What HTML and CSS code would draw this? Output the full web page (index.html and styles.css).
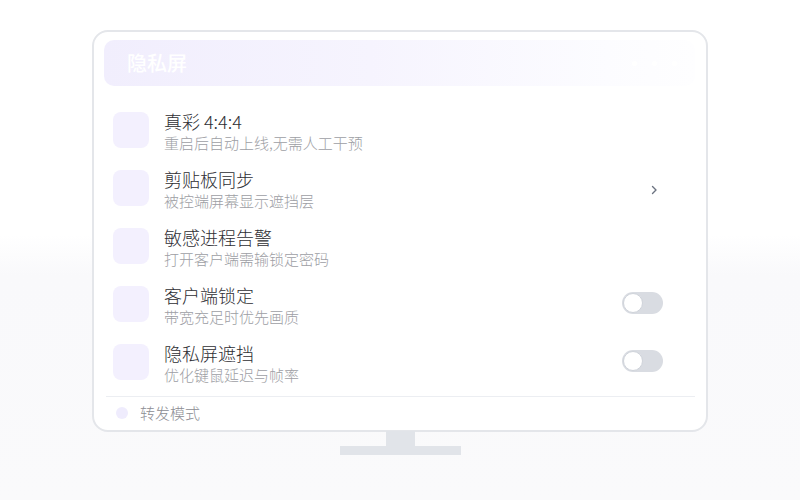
FILE: index.html
```html
<!DOCTYPE html>
<html lang="zh-CN">
<head>
<meta charset="utf-8">
<title>隐私屏</title>
<link rel="stylesheet" href="styles.css">
</head>
<body>
<div class="stage">
  <div class="monitor">
    <div class="header">
      <span class="header-title">隐私屏</span>
      <span class="header-dots"><i></i><i></i><i></i></span>
    </div>
    <div class="rows">
      <div class="row">
        <div class="icon"></div>
        <div class="text">
          <div class="title">真彩 4:4:4</div>
          <div class="sub">重启后自动上线,无需人工干预</div>
        </div>
      </div>
      <div class="row">
        <div class="icon"></div>
        <div class="text">
          <div class="title">剪贴板同步</div>
          <div class="sub">被控端屏幕显示遮挡层</div>
        </div>
        <svg class="chevron" width="7" height="10" viewBox="0 0 7 10"><polyline points="1.5,1.5 5,5 1.5,8.5" fill="none" stroke="#6b7280" stroke-width="1.4" stroke-linecap="round" stroke-linejoin="round"/></svg>
      </div>
      <div class="row">
        <div class="icon"></div>
        <div class="text">
          <div class="title">敏感进程告警</div>
          <div class="sub">打开客户端需输锁定密码</div>
        </div>
      </div>
      <div class="row">
        <div class="icon"></div>
        <div class="text">
          <div class="title">客户端锁定</div>
          <div class="sub">带宽充足时优先画质</div>
        </div>
        <div class="toggle"><span class="knob"></span></div>
      </div>
      <div class="row">
        <div class="icon"></div>
        <div class="text">
          <div class="title">隐私屏遮挡</div>
          <div class="sub">优化键鼠延迟与帧率</div>
        </div>
        <div class="toggle"><span class="knob"></span></div>
      </div>
    </div>
    <div class="divider"></div>
    <div class="footer">
      <span class="dot"></span>
      <span class="footer-text">转发模式</span>
    </div>
  </div>
  <div class="neck"></div>
  <div class="base"></div>
</div>
</body>
</html>
```
FILE: styles.css
```css
* { box-sizing: border-box; }
html, body { margin: 0; padding: 0; }
body {
  width: 800px;
  height: 500px;
  overflow: hidden;
  font-family: "Noto Sans CJK SC", "Noto Sans", sans-serif;
  background: linear-gradient(to bottom, #ffffff 0px, #ffffff 235px, #f9f9fb 275px, #fafafb 500px);
}
.stage {
  padding-top: 30px;
  display: flex;
  flex-direction: column;
  align-items: center;
}
.monitor {
  width: 616px;
  height: 402px;
  border: 2px solid #e4e6ea;
  border-radius: 16px;
  background: #ffffff;
  padding: 8px 11px 0 10px;
  display: flex;
  flex-direction: column;
}
.header {
  height: 46px;
  border-radius: 10px;
  background: linear-gradient(to right, #f1eefd 0%, #f6f4fe 45%, #fcfcff 85%, #fefeff 100%);
  display: flex;
  align-items: center;
  justify-content: space-between;
  padding: 0 18px 0 23px;
}
.header-title {
  color: #ffffff;
  font-size: 20px;
  font-weight: 500;
  line-height: 24px;
}
.header-dots { display: flex; gap: 15px; align-items: center; }
.header-dots i {
  display: block;
  width: 5px;
  height: 5px;
  border-radius: 50%;
  background: #ffffff;
}
.rows {
  margin-top: 26px;
  padding: 0 32px 0 9px;
  display: flex;
  flex-direction: column;
  gap: 22px;
}
.row {
  height: 36px;
  display: flex;
  align-items: flex-start;
}
.icon {
  width: 36px;
  height: 36px;
  flex: none;
  border-radius: 8px;
  background: #f3f0fe;
}
.text {
  margin-left: 15px;
  margin-top: -2px;
  flex: 1;
}
.title {
  font-size: 18px;
  font-weight: 300;
  line-height: 22px;
  color: #2e2e33;
}
.sub {
  margin-top: 1px;
  font-size: 15px;
  font-weight: 300;
  line-height: 20px;
  color: #9d9ea4;
  white-space: nowrap;
}
.chevron {
  align-self: center;
  margin-right: 5px;
  margin-top: 3px;
}
.toggle {
  align-self: center;
  width: 41px;
  height: 22px;
  border-radius: 11px;
  background: #d9dce2;
  padding: 1px;
  margin-top: -2px;
}
.knob {
  display: block;
  width: 20px;
  height: 20px;
  border-radius: 50%;
  background: #ffffff;
  border: 1px solid #cfd3da;
}
.divider {
  margin: 16px 0 0 2px;
  height: 1px;
  background: #eceef2;
}
.footer {
  height: 32px;
  display: flex;
  align-items: center;
  padding-left: 12px;
  gap: 12px;
}
.dot {
  width: 12px;
  height: 12px;
  border-radius: 50%;
  background: #efecfd;
}
.footer-text {
  font-size: 15px;
  font-weight: 300;
  color: #8c8d93;
  line-height: 20px;
}
.neck {
  width: 29px;
  height: 15px;
  background: #e1e4e9;
  margin-top: -1px;
}
.base {
  width: 121px;
  height: 9px;
  background: #e1e4e9;
}
```
